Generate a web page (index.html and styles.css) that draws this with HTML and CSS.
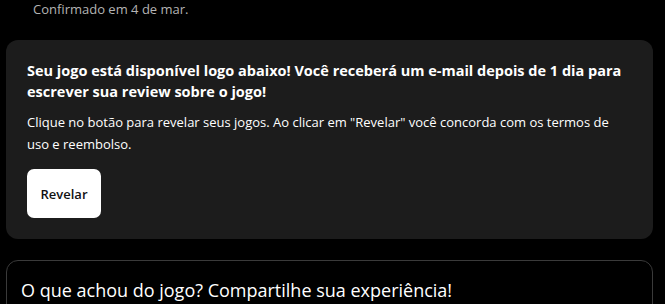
FILE: index.html
```html
<!DOCTYPE html>
<html lang="pt-BR">
<head>
<meta charset="utf-8">
<link rel="stylesheet" href="styles.css">
</head>
<body>
<div class="page">
  <p class="confirmed">Confirmado em 4 de mar.</p>
  <section class="card">
    <h2 class="title">Seu jogo está disponível logo abaixo! Você receberá um e-mail depois de 1 dia para escrever sua review sobre o jogo!</h2>
    <p class="desc">Clique no botão para revelar seus jogos. Ao clicar em "Revelar" você concorda com os termos de uso e reembolso.</p>
    <button class="reveal">Revelar</button>
  </section>
  <section class="review">
    <h3 class="review-title">O que achou do jogo? Compartilhe sua experiência!</h3>
  </section>
</div>
</body>
</html>
```
FILE: styles.css
```css
html, body {
  margin: 0;
  padding: 0;
  background: #000;
  color: #fff;
  font-family: "Open Sans", "Noto Sans", sans-serif;
  overflow: hidden;
}
.page {
  padding: 0 12px 0 6px;
  display: flex;
  flex-direction: column;
}
.confirmed {
  margin: 0;
  padding: 0 0 0 27px;
  height: 40px;
  font-size: 13px;
  line-height: 18px;
  color: #b4b4b4;
}
.card {
  background: #1c1c1c;
  border-radius: 12px;
  padding: 20px 21px 20px 21px;
  height: 199px;
  box-sizing: border-box;
}
.title {
  margin: 0;
  font-size: 14.5px;
  font-weight: 700;
  line-height: 21px;
}
.desc {
  margin: 9px 0 14px;
  font-size: 13px;
  line-height: 22px;
  color: #fff;
}
.reveal {
  width: 74px;
  height: 49px;
  border: 0;
  border-radius: 7px;
  background: #fff;
  color: #111;
  font-family: inherit;
  font-size: 13px;
  font-weight: 600;
}
.review {
  margin-top: 21px;
  border: 1px solid #3a3a3a;
  border-radius: 12px;
  padding: 17px 14px;
  min-height: 60px;
}
.review-title {
  margin: 0;
  font-size: 18px;
  font-weight: 400;
  line-height: 24px;
}
```
